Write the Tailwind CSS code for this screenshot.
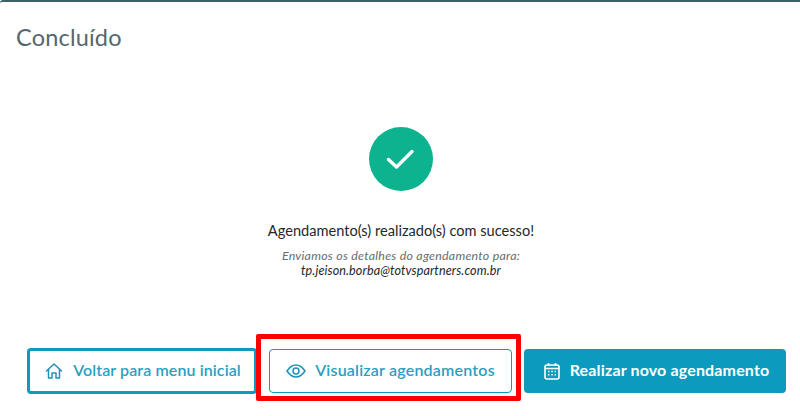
<!DOCTYPE html>
<html lang="pt-BR">
<head>
<meta charset="utf-8">
<script src="https://cdn.jsdelivr.net/npm/@tailwindcss/browser@4"></script>
</head>
<body class="bg-white">
<main class="w-[800px] h-[416px] overflow-hidden flex flex-col bg-white border-t-2 border-[#3f5f6b] rounded-tl-[3px] font-['Lato',sans-serif]">
  <h1 class="pl-[16px] pt-[20px] text-[23.5px] leading-[30px] font-normal text-[#55676d] tracking-[0.2px]">Concluído</h1>
  <section class="mt-[75px] ml-[2px] flex flex-col items-center">
    <div class="w-[64px] h-[64px] rounded-full bg-[#0cb38e] flex items-center justify-center">
      <svg width="32" height="32" viewBox="0 0 32 32" fill="none" stroke="#fff" stroke-width="3.4" stroke-linecap="round" stroke-linejoin="round"><path d="M3.5 16.5 L11.5 24 L27 8.5"/></svg>
    </div>
    <p class="mt-[31px] text-[14.6px] leading-[18px] text-[#23282b]">Agendamento(s) realizado(s) com sucesso!</p>
    <p class="mt-[9px] text-[12.4px] leading-[14px] italic tracking-[0.25px] text-[#666d71]">Enviamos os detalhes do agendamento para:</p>
    <p class="mt-[1px] text-[12.6px] leading-[14px] italic tracking-[0.1px] text-[#23282b]">tp.jeison.borba@totvspartners.com.br</p>
  </section>
  <div class="mt-[70px] pl-[27px] pr-[14px] flex items-center gap-[12px]">
    <button class="w-[230px] h-[46px] pl-[2px] flex items-center justify-center gap-[10px] bg-white border-[3px] border-[#0c9abe] rounded-[4px] text-[16px] tracking-[0.1px] font-semibold text-[#2a9fc0]">
      <svg width="18" height="18" viewBox="0 0 18 18" fill="none" stroke="#1f93b5" stroke-width="1.5" stroke-linejoin="round" stroke-linecap="round"><path d="M1.5 9 L9 2 L16.5 9"/><path d="M3.5 7.5 V16 H7 V11 H11 V16 H14.5 V7.5"/></svg>
      <span class="mb-[2px]">Voltar para menu inicial</span>
    </button>
    <div class="relative">
      <button class="w-[243px] h-[44px] flex items-center justify-center gap-[9px] bg-white border border-[#0c9abe] rounded-[4px] text-[16px] tracking-[0.2px] font-semibold text-[#2a9fc0]">
        <svg width="20" height="14" viewBox="0 0 20 14" fill="none" stroke="#1f93b5" stroke-width="1.5"><path d="M1 7 C4 2.5 7 1 10 1 C13 1 16 2.5 19 7 C16 11.5 13 13 10 13 C7 13 4 11.5 1 7 Z"/><circle cx="10" cy="7" r="3"/></svg>
        <span class="mb-[2px]">Visualizar agendamentos</span>
      </button>
      <div class="absolute left-[-13px] top-[-15px] w-[265px] h-[67px] border-[5px] border-[#fe0000] rounded-[2px] pointer-events-none"></div>
    </div>
    <button class="w-[262px] h-[44px] pl-[3px] flex items-center justify-center gap-[10px] bg-[#0c9abe] rounded-[4px] text-[16px] tracking-[0.15px] font-bold text-white">
      <svg width="16" height="18" viewBox="0 0 16 18" fill="none" stroke="#fff" stroke-width="1.6"><rect x="1" y="3" width="14" height="14" rx="2"/><path d="M4.5 1 V4 M11.5 1 V4 M1 6.5 H15"/><path d="M4 9.5 H5.5 M7.3 9.5 H8.8 M10.6 9.5 H12 M4 12.7 H5.5 M7.3 12.7 H8.8 M10.6 12.7 H12" stroke-width="1.6"/></svg>
      <span class="mb-[2px]">Realizar novo agendamento</span>
    </button>
  </div>
</main>
</body>
</html>
